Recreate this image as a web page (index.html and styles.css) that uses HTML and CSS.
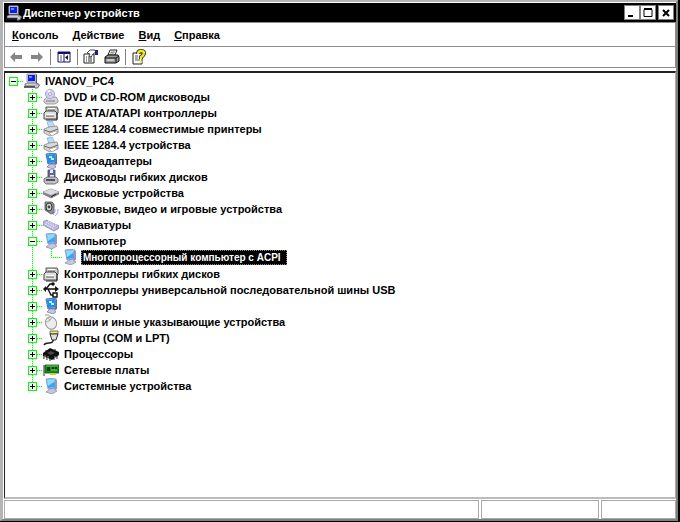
FILE: index.html
```html
<!DOCTYPE html>
<html lang="ru">

<head>
    <meta charset="UTF-8">
    <meta name="viewport" content="width=device-width, initial-scale=1.0">
    <title>Диспетчер устройств</title>
    <link rel="stylesheet" href="styles.css">
</head>

<body>
    <!-- Набор значков -->
    <svg class="sprite" aria-hidden="true">
        <symbol id="pc" viewBox="0 0 16 16">
            <path d="M3 1h9v8H3z" fill="#d8d8e4" stroke="#99a" />
            <path d="M4 2h7v6H4z" fill="#0a20e8" />
            <path d="M5 3h3v2H5z" fill="#5c8cff" />
            <path d="M12 1l1 1v8h-1z" fill="#556" />
            <path d="M1 11l2-1h10l2 2v1H1z" fill="#d0d0d8" stroke="#556" stroke-width=".7" />
            <path d="M0 14h11" stroke="#223" stroke-width="1.4" />
            <path d="M12 11q4-1 3 2t-4 2" fill="#ccc" stroke="#666" />
        </symbol>
        <symbol id="monitor" viewBox="0 0 16 16">
            <path d="M3 1l8-1 1 10-7 1z" fill="#b4c4ec" stroke="#7484b8" stroke-width=".7" />
            <path d="M4 2l7-1 1 8-7 1z" fill="#38a4f8" />
            <path d="M4 2l7-1v3L5 8z" fill="#8cdcff" />
            <path d="M12 0l2 2v9l-2 1z" fill="#9498bc" />
            <path d="M7 11l5-1v2l2 1-5 3-6-2z" fill="#c4c8dc" stroke="#8488a8" stroke-width=".7" />
        </symbol>
        <symbol id="display" viewBox="0 0 16 16">
            <path d="M3 1l10-1v10l-8 1z" fill="#88b4e8" stroke="#5070a0" />
            <path d="M4 2l8-1v8l-7 1z" fill="#1890f0" />
            <path d="M6 3h3v2H6zM8 5h3v2H8z" fill="#c0f0ff" />
            <path d="M13 1l1 1v9l-2 1z" fill="#666a90" />
            <path d="M7 11h5v2l1 1-3 2-6-2z" fill="#c4c8dc" stroke="#7478a0" stroke-width=".7" />
        </symbol>
        <symbol id="cd" viewBox="0 0 16 16">
            <path d="M1 11l3-3h9l2 3v2l-3 2H3l-2-2z" fill="#d4d4dc" stroke="#888" stroke-width=".8" />
            <circle cx="7" cy="5" r="4.6" fill="#d0d0f4" stroke="#9c9cc4" stroke-width=".8" />
            <path d="M7 5L4 2l3-1z" fill="#fff" />
            <circle cx="7" cy="5" r="1.5" fill="#fff" stroke="#88a" stroke-width=".7" />
            <path d="M3 12h9" stroke="#777" />
        </symbol>
        <symbol id="controller" viewBox="0 0 16 16">
            <path d="M3 2h11l1 2v4l-1 1H3z" fill="#ccc" stroke="#555" />
            <path d="M1 8l2-2h9l2 2v6H1z" fill="#e0e0e0" stroke="#444" />
            <path d="M5 4h7M3 10h8" stroke="#fff" stroke-width="2" />
            <path d="M5 5h7M3 11h8" stroke="#555" />
            <path d="M14 8v7H3" fill="none" stroke="#222" />
        </symbol>
        <symbol id="printer" viewBox="0 0 16 16">
            <path d="M4 1l5-1 3 6-6 1z" fill="#b8dcfc" stroke="#84a8cc" stroke-width=".7" />
            <path d="M1 8l5-2 8-1 1 3v4l-8 3-6-3z" fill="#d8d8dc" stroke="#888" stroke-width=".8" />
            <path d="M1 9l6 2 8-3" fill="none" stroke="#666" />
            <path d="M6 12l7-2 2 1-6 4z" fill="#fff" stroke="#888" stroke-width=".6" />
        </symbol>
        <symbol id="floppy" viewBox="0 0 16 16">
            <path d="M5 1h7v9H5z" fill="#686894" stroke="#44446c" stroke-width=".8" />
            <path d="M7 1h3v3H7zM7 6h4v4H7z" fill="#e8e8fc" />
            <path d="M1 10l3-2h9l2 2v3l-3 2H3l-2-2z" fill="#c0c0cc" stroke="#555" stroke-width=".8" />
            <path d="M3 11h9" stroke="#222" stroke-width="1.4" />
        </symbol>
        <symbol id="disk" viewBox="0 0 16 16">
            <path d="M0 7l8-3 8 3v2l-8 4-8-4z" fill="#888890" stroke="#666" stroke-width=".6" />
            <path d="M0 7l8-3 8 3-8 3z" fill="#dcdce4" />
            <path d="M8 12l5-3" stroke="#222" />
        </symbol>
        <symbol id="sound" viewBox="0 0 16 16">
            <path d="M2 1h7l2 2v9l-3 1-6-4z" fill="#909098" stroke="#555" stroke-width=".8" />
            <ellipse cx="6" cy="6" rx="3" ry="4" fill="#d4d4dc" stroke="#333" />
            <circle cx="6" cy="6" r="1.4" fill="#444" />
            <path d="M12 8q1 3-2 6M15 8q1 4-3 7" fill="none" stroke="#a4a4e4" />
        </symbol>
        <symbol id="keyboard" viewBox="0 0 16 16">
            <path d="M0 5l3-2 13 6v2l-5 3L0 8z" fill="#b8b8e0" stroke="#7878a0" stroke-width=".7" />
            <path d="M3 5l9 5M5 4l9 5M2 7l9 5" stroke="#fff" stroke-dasharray="1 1" />
        </symbol>
        <symbol id="usb" viewBox="0 0 16 16">
            <path d="M1 7h13M3 7l4-5h3M5 7l3 6h3" fill="none" stroke="#111" stroke-width="1.4" />
            <path d="M0 7l3-3v6zM16 7l-4-3v6z" fill="#111" />
            <circle cx="10" cy="2" r="1.8" fill="#111" />
            <path d="M10 11h4v4h-4z" fill="#fff" stroke="#111" stroke-width="1.4" />
        </symbol>
        <symbol id="mouse" viewBox="0 0 16 16">
            <path d="M2 1q4-1 6 2" fill="none" stroke="#999" />
            <ellipse cx="8" cy="9" rx="5.5" ry="6.3" fill="#ececec" stroke="#999" transform="rotate(-25 8 9)" />
            <path d="M2 8q5 0 7-5M5 3l2 4" fill="none" stroke="#aaa" />
        </symbol>
        <symbol id="port" viewBox="0 0 16 16">
            <path d="M7 1h8v3H7z" fill="#f4e868" stroke="#555" stroke-width=".8" />
            <path d="M7 4h8l-2 6H9z" fill="#e0e0e0" stroke="#333" />
            <path d="M10 10q0 3-4 3t-5 2" fill="none" stroke="#222" stroke-width="1.5" />
        </symbol>
        <symbol id="cpu" viewBox="0 0 16 16">
            <path d="M0 7l7-5 9 4v3l-7 5-9-4z" fill="#111" />
            <path d="M4 7l4-2 4 2-4 2z" fill="#444" />
            <path d="M1 10v3M4 11v3M7 12v3M11 12v2M14 10v3M3 4v2M12 3v2" stroke="#222" />
            <path d="M2 9v3M5 10v3M12 10v3" stroke="#ccc" stroke-width=".7" />
        </symbol>
        <symbol id="network" viewBox="0 0 16 16">
            <path d="M1 3v11" stroke="#777" stroke-width="1.5" />
            <path d="M2 3h14v8H2z" fill="#1c8c1c" stroke="#0a4c0a" stroke-width=".8" />
            <path d="M4 5h3v4H4zM9 5h2v2H9zM12 5h2v2h-2z" fill="#083c08" />
            <path d="M3 4h12M8 8h6" stroke="#6ce06c" stroke-width=".8" />
            <path d="M7 11h6v2H7z" fill="#d8c830" />
        </symbol>
        <symbol id="arrow" viewBox="0 0 16 16">
            <path d="M2 8l5-5v3h7v4H7v3z" fill="#858585" />
        </symbol>
        <symbol id="panel" viewBox="0 0 16 16">
            <path d="M2 3h12v10H2z" fill="#fff" stroke="#10106c" />
            <path d="M2 4h12" stroke="#10106c" stroke-width="2" />
            <path d="M8 5v8" stroke="#10106c" />
            <path d="M4 7h2M4 9h2M4 11h2" stroke="#556" />
            <path d="M12 6v5L9 8.500z" fill="#111" />
        </symbol>
        <symbol id="props" viewBox="0 0 16 16">
            <path d="M1 5h10v9H1z" fill="#fff" stroke="#222" />
            <path d="M3 8h1M5 8h4M3 10h1M5 10h4M3 12h1M5 12h4" stroke="#333" />
            <path d="M4 4l3-3h5l1 2-3 2-2 3-2-1 1-2z" fill="#fff" stroke="#222" stroke-width=".8" />
            <path d="M12 1h3v5h-3z" fill="#20207c" />
        </symbol>
        <symbol id="print" viewBox="0 0 16 16">
            <path d="M6 1h7l-2 5H4z" fill="#fff" stroke="#222" />
            <path d="M7 3h4M6 4h4" stroke="#555" stroke-width=".7" />
            <path d="M1 8l3-2h10l1 2v4l-3 2H1z" fill="#999" stroke="#111" />
            <path d="M1 9h11l3-2M12 9v5" fill="none" stroke="#111" />
            <path d="M3 11h7" stroke="#ddd" stroke-width="1.4" />
        </symbol>
        <symbol id="help" viewBox="0 0 16 16">
            <path d="M2 4h9v11H2z" fill="#fff" stroke="#222" />
            <path d="M4 7h3M4 9h3M4 11h5" stroke="#555" />
            <path d="M7 5q0-3 3-3t3 2q0 2-3 4v2" fill="none" stroke="#333" stroke-width="4" />
            <path d="M7 5q0-3 3-3t3 2q0 2-3 4v2M10 12v2" fill="none" stroke="#f4e820" stroke-width="2.300" />
        </symbol>
    </svg>

    <div class="window">
        <header class="titlebar">
            <svg class="icon"><use href="#pc" /></svg>
            <h1>Диспетчер устройств</h1>
            <div class="controls">
                <button type="button" aria-label="Свернуть"><svg viewBox="0 0 10 10"><path d="M1 8h5" stroke="#000" stroke-width="2" /></svg></button>
                <button type="button" aria-label="Развернуть"><svg viewBox="0 0 10 10"><path d="M1 1.500h8v7H1z" fill="none" stroke="#000" /><path d="M1 1h8" stroke="#000" stroke-width="2" /></svg></button>
                <button type="button" class="close" aria-label="Закрыть"><svg viewBox="0 0 10 10"><path d="M2 2l6 6M8 2L2 8" stroke="#000" stroke-width="2" /></svg></button>
            </div>
        </header>

        <nav class="menubar">
            <button type="button"><u>К</u>онсоль</button>
            <button type="button"><u>Д</u>ействие</button>
            <button type="button"><u>В</u>ид</button>
            <button type="button"><u>С</u>правка</button>
        </nav>

        <div class="toolbar">
            <button type="button" aria-label="Назад"><svg class="icon"><use href="#arrow" /></svg></button>
            <button type="button" aria-label="Вперед"><svg class="icon flip"><use href="#arrow" /></svg></button>
            <span class="separator"></span>
            <button type="button" aria-label="Дерево консоли"><svg class="icon"><use href="#panel" /></svg></button>
            <span class="separator"></span>
            <button type="button" aria-label="Свойства"><svg class="icon"><use href="#props" /></svg></button>
            <button type="button" aria-label="Печать"><svg class="icon"><use href="#print" /></svg></button>
            <span class="separator"></span>
            <button type="button" aria-label="Справка"><svg class="icon"><use href="#help" /></svg></button>
        </div>

        <main class="content">
            <div class="row"><button type="button" class="toggle minus" aria-label="Свернуть"></button><svg class="icon"><use href="#pc" /></svg><span>IVANOV_PC4</span></div>
            <ul class="tree">
                <li><div class="row"><button type="button" class="toggle" aria-label="Развернуть"></button><svg class="icon"><use href="#cd" /></svg><span>DVD и CD-ROM дисководы</span></div></li>
                <li><div class="row"><button type="button" class="toggle" aria-label="Развернуть"></button><svg class="icon"><use href="#controller" /></svg><span>IDE ATA/ATAPI контроллеры</span></div></li>
                <li><div class="row"><button type="button" class="toggle" aria-label="Развернуть"></button><svg class="icon"><use href="#printer" /></svg><span>IEEE 1284.4 совместимые принтеры</span></div></li>
                <li><div class="row"><button type="button" class="toggle" aria-label="Развернуть"></button><svg class="icon"><use href="#printer" /></svg><span>IEEE 1284.4 устройства</span></div></li>
                <li><div class="row"><button type="button" class="toggle" aria-label="Развернуть"></button><svg class="icon"><use href="#display" /></svg><span>Видеоадаптеры</span></div></li>
                <li><div class="row"><button type="button" class="toggle" aria-label="Развернуть"></button><svg class="icon"><use href="#floppy" /></svg><span>Дисководы гибких дисков</span></div></li>
                <li><div class="row"><button type="button" class="toggle" aria-label="Развернуть"></button><svg class="icon"><use href="#disk" /></svg><span>Дисковые устройства</span></div></li>
                <li><div class="row"><button type="button" class="toggle" aria-label="Развернуть"></button><svg class="icon"><use href="#sound" /></svg><span>Звуковые, видео и игровые устройства</span></div></li>
                <li><div class="row"><button type="button" class="toggle" aria-label="Развернуть"></button><svg class="icon"><use href="#keyboard" /></svg><span>Клавиатуры</span></div></li>
                <li>
                    <div class="row"><button type="button" class="toggle minus" aria-label="Свернуть"></button><svg class="icon"><use href="#monitor" /></svg><span>Компьютер</span></div>
                    <ul class="subtree">
                        <li class="row leaf"><svg class="icon"><use href="#monitor" /></svg><span class="selected">Многопроцессорный компьютер с ACPI</span></li>
                    </ul>
                </li>
                <li><div class="row"><button type="button" class="toggle" aria-label="Развернуть"></button><svg class="icon"><use href="#controller" /></svg><span>Контроллеры гибких дисков</span></div></li>
                <li><div class="row"><button type="button" class="toggle" aria-label="Развернуть"></button><svg class="icon"><use href="#usb" /></svg><span>Контроллеры универсальной последовательной шины USB</span></div></li>
                <li><div class="row"><button type="button" class="toggle" aria-label="Развернуть"></button><svg class="icon"><use href="#display" /></svg><span>Мониторы</span></div></li>
                <li><div class="row"><button type="button" class="toggle" aria-label="Развернуть"></button><svg class="icon"><use href="#mouse" /></svg><span>Мыши и иные указывающие устройства</span></div></li>
                <li><div class="row"><button type="button" class="toggle" aria-label="Развернуть"></button><svg class="icon"><use href="#port" /></svg><span>Порты (COM и LPT)</span></div></li>
                <li><div class="row"><button type="button" class="toggle" aria-label="Развернуть"></button><svg class="icon"><use href="#cpu" /></svg><span>Процессоры</span></div></li>
                <li><div class="row"><button type="button" class="toggle" aria-label="Развернуть"></button><svg class="icon"><use href="#network" /></svg><span>Сетевые платы</span></div></li>
                <li><div class="row"><button type="button" class="toggle" aria-label="Развернуть"></button><svg class="icon"><use href="#monitor" /></svg><span>Системные устройства</span></div></li>
            </ul>
        </main>

        <footer class="statusbar">
            <div></div>
            <div></div>
            <div></div>
        </footer>
    </div>
</body>

</html>
```

FILE: styles.css
```css
* {
    box-sizing: border-box;
}

body {
    display: flex;
    height: 100vh;
    margin: 0;
    padding: 0 2px 1px 0;
    background-color: #000;
    font-family: "Liberation Sans", Arial, sans-serif;
    font-size: 11px;
    font-weight: bold;
    color: #000;
}

button {
    padding: 0;
    border: none;
    background: none;
    font: inherit;
    color: inherit;
}

h1,
ul {
    margin: 0;
    padding: 0;
    font-size: inherit;
    list-style: none;
}

.sprite {
    display: none;
}

.icon {
    display: block;
    flex: none;
    width: 16px;
    height: 16px;
}

.window {
    display: flex;
    flex: 1;
    flex-direction: column;
    min-width: 0;
    padding: 1px 0 0 1px;
    border: 2px solid #808080;
    border-top-color: #b4b4b4;
    border-left: 3px solid #b4b4b4;
    background-color: #fff;
}

/* Заголовок окна */
.titlebar {
    display: flex;
    align-items: center;
    gap: 1px;
    height: 19px;
    padding: 0 2px;
    background-color: #000;
    color: #fff;
}

.controls {
    display: flex;
    margin-left: auto;
}

.controls button {
    display: flex;
    align-items: center;
    justify-content: center;
    width: 16px;
    height: 15px;
    border: 1px solid #808080;
    background-color: #fff;
}

.controls .close {
    margin-left: 2px;
}

.controls svg {
    width: 10px;
    height: 10px;
}

/* Меню и панель инструментов */
.menubar {
    display: flex;
    align-items: center;
    gap: 14px;
    height: 25px;
    padding: 0 7px;
    border: 1px solid #8c8c8c;
}

.toolbar {
    display: flex;
    align-items: center;
    gap: 5px;
    height: 21px;
    padding: 0 3px;
    border: 1px solid #8c8c8c;
    border-top: none;
}

.separator {
    width: 1px;
    height: 16px;
    background-color: #808080;
}

.flip {
    transform: scaleX(-1);
}

/* Дерево устройств */
.content {
    flex: 1;
    min-height: 0;
    margin-top: 3px;
    padding: 0 4px;
    border: 2px solid #222;
    border-left-width: 1px;
    border-right: 1px solid #aaa;
    border-bottom-color: #bbb;
    overflow: auto;
}

.row {
    display: flex;
    align-items: center;
    height: 16px;
    /* пунктир от квадратика к значку */
    background: repeating-linear-gradient(90deg, #0f0 0 1px, #cfc 1px 2px) 9px 8px / 6px 1px no-repeat;
    white-space: nowrap;
}

.row .icon {
    margin-right: 5px;
}

.toggle {
    flex: none;
    width: 9px;
    height: 9px;
    margin-right: 6px;
    border: 1px solid #0f0;
    background:
        linear-gradient(#000, #000) 1px 3px / 5px 1px no-repeat,
        linear-gradient(#000, #000) 3px 1px / 1px 5px no-repeat,
        #fff;
}

.toggle.minus {
    background: linear-gradient(#000, #000) 1px 3px / 5px 1px no-repeat, #fff;
}

/* вертикальный пунктир доходит до последней строки */
.tree {
    margin-left: 19px;
    background: repeating-linear-gradient(#0f0 0 1px, #cfc 1px 2px) 4px 0 / 1px calc(100% - 8px) no-repeat;
}

.subtree {
    margin-left: 23px;
    padding-bottom: 1px;
}

.leaf {
    padding-left: 11px;
    background:
        repeating-linear-gradient(90deg, #0f0 0 1px, #cfc 1px 2px) 0 8px / 11px 1px no-repeat,
        repeating-linear-gradient(#0f0 0 1px, #cfc 1px 2px) 0 0 / 1px 8px no-repeat;
}

.leaf .icon {
    margin-right: 3px;
}

.selected {
    padding: 1px 5px 1px 1px;
    border: 1px dotted #888;
    background-color: #000;
    font-size: 10px;
    color: #fff;
}

/* Строка состояния */
.statusbar {
    display: grid;
    grid-template-columns: 1fr 118px 75px;
    gap: 2px;
    height: 20px;
    padding: 1px 0 0;
}

.statusbar div {
    border: 1px solid #aaa;
}
```
